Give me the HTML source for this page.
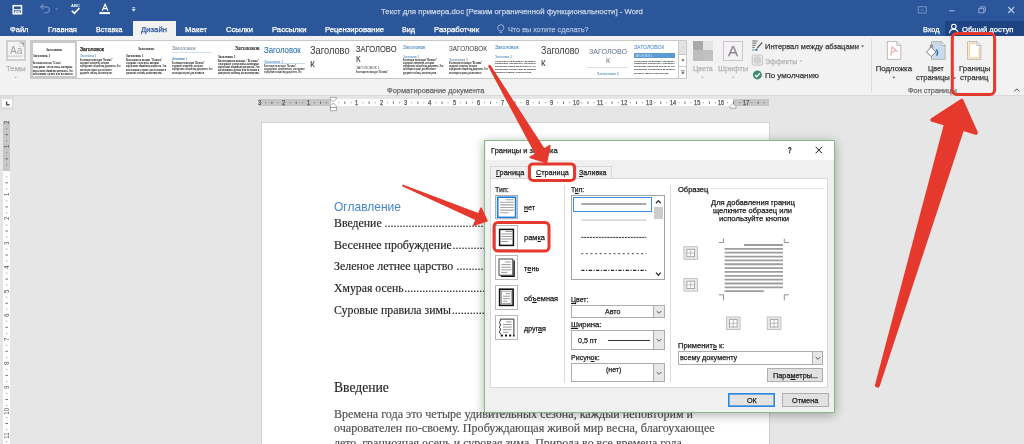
<!DOCTYPE html>
<html lang="ru"><head><meta charset="utf-8"><title>Word</title>
<style>
*{margin:0;padding:0;box-sizing:border-box}
html,body{width:1024px;height:444px;overflow:hidden;background:#e6e6e6}
body{will-change:transform;position:relative;font-family:"Liberation Sans",sans-serif;font-size:8px;color:#444}
.a{position:absolute}
.t{position:absolute;white-space:nowrap;transform-origin:0 50%;display:block;-webkit-text-stroke:.25px}
.vr{white-space:nowrap;display:block}
.f{font-family:"Liberation Serif",serif;-webkit-text-stroke:.15px}
svg{position:absolute;overflow:visible}
u{text-decoration:underline;text-decoration-thickness:0.6px;text-underline-offset:1px}
</style></head><body>
<div class="a" style="left:0px;top:0px;width:1024px;height:36px;background:#2b579a;"></div>
<div class="a" style="left:132.5px;top:21px;width:43.5px;height:15.5px;background:#f2f2f2;"></div>
<div class="a" style="left:945px;top:21px;width:79px;height:15px;background:#1f4484;"></div>
<span class="t" style="left:381px;top:6.7px;font-size:8px;line-height:10.4px;height:10.4px;color:#c8d3e6;transform:scaleX(0.972);">Текст для примера.doc [Режим ограниченной функциональности] - Word</span>
<span class="t" style="left:9.5px;top:24.7px;font-size:7.8px;line-height:10.1px;height:10.1px;color:#fff;transform:scaleX(0.965);">Файл</span>
<span class="t" style="left:48px;top:24.7px;font-size:7.8px;line-height:10.1px;height:10.1px;color:#fff;transform:scaleX(0.977);">Главная</span>
<span class="t" style="left:96px;top:24.7px;font-size:7.8px;line-height:10.1px;height:10.1px;color:#fff;transform:scaleX(0.914);">Вставка</span>
<span class="t" style="left:141px;top:24.7px;font-size:7.8px;line-height:10.1px;height:10.1px;color:#2b579a;transform:scaleX(0.992);">Дизайн</span>
<span class="t" style="left:185px;top:24.7px;font-size:7.8px;line-height:10.1px;height:10.1px;color:#fff;">Макет</span>
<span class="t" style="left:226px;top:24.7px;font-size:7.8px;line-height:10.1px;height:10.1px;color:#fff;transform:scaleX(0.983);">Ссылки</span>
<span class="t" style="left:272px;top:24.7px;font-size:7.8px;line-height:10.1px;height:10.1px;color:#fff;transform:scaleX(0.986);">Рассылки</span>
<span class="t" style="left:325px;top:24.7px;font-size:7.8px;line-height:10.1px;height:10.1px;color:#fff;transform:scaleX(0.980);">Рецензирование</span>
<span class="t" style="left:402px;top:24.7px;font-size:7.8px;line-height:10.1px;height:10.1px;color:#fff;transform:scaleX(0.921);">Вид</span>
<span class="t" style="left:433.5px;top:24.7px;font-size:7.8px;line-height:10.1px;height:10.1px;color:#fff;transform:scaleX(0.990);">Разработчик</span>
<span class="t" style="left:507.5px;top:24.7px;font-size:7.8px;line-height:10.1px;height:10.1px;color:#aabcdd;transform:scaleX(0.934);">Что вы хотите сделать?</span>
<span class="t" style="left:922.5px;top:24.7px;font-size:7.8px;line-height:10.1px;height:10.1px;color:#fff;transform:scaleX(0.935);">Вход</span>
<span class="t" style="left:962px;top:24.7px;font-size:7.8px;line-height:10.1px;height:10.1px;color:#fff;transform:scaleX(0.983);">Общий доступ</span>
<svg style="left:0;top:0" width="1024" height="36" viewBox="0 0 1024 36" fill="none">
<g stroke="#fff"><rect x="13.200" y="5.700" width="8.300" height="8.100" stroke-width="1.500"/><path d="M13.200 9.700h8.300" stroke-width="1.100"/><path d="M15.300 13.800v-2h4v2" stroke-width="1.200"/></g>
<g stroke="#718cbf" stroke-width="1.2"><path d="M44 13c3.5 0 5.4-1.2 5.4-3.2S47.600 6.800 45.500 6.800h-4.500M43.500 4.200l-2.800 2.600 2.800 2.600"/></g>
<path d="M55 8.400h3.400l-1.700 1.900z" fill="#718cbf"/>
<path d="M71.800 10.700l2.600 2.700 5-5.400" stroke="#fff" stroke-width="1.6"/>
<path d="M102.300 10.800l2.800-6.500 2.800 6.500M103.300 8.600h3.600" stroke="#fff" stroke-width="1.2"/>
<rect x="99.400" y="12.100" width="10.600" height="2" fill="#fff"/>
<path d="M132.200 7.600h3M132.200 9.200h3l-1.500 2z" stroke="#dfe6f2" stroke-width="0.8" fill="#dfe6f2"/>
<g stroke="#7d97c7" stroke-width="0.900"><rect x="918.200" y="6.700" width="8" height="6.300"/><path d="M921 10.700l1.200-1.300 1.200 1.300" /></g><path d="M949.200 10.800h5.400" stroke="#a9b9d9" stroke-width="1"/><g stroke="#98add4" stroke-width=".9"><rect x="978.800" y="8.400" width="5" height="4.400"/><path d="M980.300 8.400v-1.500h5v4.400h-1.500"/></g><path d="M1008.200 7l6 6M1014.200 7l-6 6" stroke="#bccae3" stroke-width="1.100"/>
<g stroke="#aabcdd" stroke-width="0.900"><path d="M499.700 31c-1.300-1-1.900-2-1.900-3.300a3 3 0 016 0c0 1.300-.6 2.300-1.900 3.300zM499.800 32.600h2.200"/></g>
<g stroke="#fff" stroke-width="1.100"><circle cx="953.800" cy="26.600" r="2.300"/><path d="M949.400 33.300c.3-2.800 2-4 4.400-4s4.100 1.200 4.400 4"/></g>
</svg>
<span class="t" style="left:70.6px;top:3.4px;font-size:16.8px;line-height:21.8px;height:21.8px;color:#fff;font-weight:bold;-webkit-text-stroke:0;transform-origin:0 0;transform:scale(0.2475,0.25);">ABC</span>
<div class="a" style="left:0px;top:36px;width:1024px;height:59px;background:#f2f2f2;"></div>
<div class="a" style="left:0px;top:94.5px;width:1024px;height:1px;background:#dadada;"></div>
<div class="a" style="left:5.7px;top:40.3px;width:20.2px;height:20.3px;background:#f6f2f6;border:2px solid #d0d0d0;"></div>
<svg style="left:0;top:36px" width="130" height="60" viewBox="0 36 130 60" fill="none"><path d="M19.800 42.300h4.300v4.300z" fill="#a8a8a8"/><path d="M19.800 42.300v4.300h4.300z" fill="#fff" stroke="#bdbdbd" stroke-width=".5"/><path d="M8.400 56.100h14.800" stroke="#b5b5b5" stroke-width="1.100" stroke-dasharray="1.500 .9"/><path d="M13.900 76.800h3.300l-1.650 1.700z" fill="#bdbdbd"/></svg>
<span class="t" style="left:9.8px;top:42.5px;font-size:11.8px;line-height:15.3px;height:15.3px;color:#a3a3a3;transform:scaleX(0.858);-webkit-text-stroke:0;">Аа</span>
<span class="t" style="left:6px;top:63.5px;font-size:7.8px;line-height:10.1px;height:10.1px;color:#b3b3b3;">Темы</span>
<div class="a" style="left:30px;top:40.4px;width:657.3px;height:38.2px;background:#fff;border:1px solid #c8c8c8;"></div>
<div class="a" style="left:30.8px;top:41.2px;width:45.9px;height:36.8px;background:#fff;border:2.500px solid #cacaca;"></div>
<span class="t f" style="left:46px;top:46.79px;font-size:14.4px;line-height:18.7px;height:18.7px;color:#1c1c1c;font-weight:bold;-webkit-text-stroke:0;transform-origin:0 0;transform:scale(0.2423,0.25);">Заголовок</span>
<span class="t f" style="left:33.4px;top:54.35px;font-size:12.8px;line-height:16.6px;height:16.6px;color:#1c1c1c;font-weight:bold;-webkit-text-stroke:0;transform-origin:0 0;transform:scale(0.2488,0.25);">Заголовок 1</span>
<span class="t f" style="left:33.4px;top:61.32px;font-size:12.0px;line-height:15.6px;height:15.6px;color:#1c1c1c;font-weight:bold;-webkit-text-stroke:0;transform-origin:0 0;transform:scale(0.1547,0.25);">Коллекции на вкладке "Вставка"</span>
<span class="t f" style="left:33.4px;top:64.74px;font-size:12.0px;line-height:15.6px;height:15.6px;color:#1c1c1c;font-weight:bold;-webkit-text-stroke:0;transform-origin:0 0;transform:scale(0.2526,0.25);">содержат элементы, которые</span>
<span class="t f" style="left:33.4px;top:68.64px;font-size:12.0px;line-height:15.6px;height:15.6px;color:#1c1c1c;font-weight:bold;-webkit-text-stroke:0;transform-origin:0 0;transform:scale(0.1861,0.25);">определяют общий вид документа. Эти</span>
<span class="t f" style="left:33.4px;top:72.24px;font-size:12.0px;line-height:15.6px;height:15.6px;color:#1c1c1c;font-weight:bold;-webkit-text-stroke:0;transform-origin:0 0;transform:scale(0.2208,0.25);">коллекции служат для вставки в</span>
<span class="t" style="left:79.5px;top:44.5px;font-size:22.4px;line-height:29.1px;height:29.1px;color:#1c1c1c;transform-origin:0 0;transform:scale(0.2280,0.25);-webkit-text-stroke:1.0px;">Заголовок</span>
<span class="t" style="left:79.5px;top:54.35px;font-size:12.8px;line-height:16.6px;height:16.6px;color:#2e74b5;-webkit-text-stroke:0;transform-origin:0 0;transform:scale(0.2329,0.25);">Заголовок 1</span>
<span class="t" style="left:79.5px;top:58.42px;font-size:10.8px;line-height:14.0px;height:14.0px;color:#1c1c1c;font-weight:bold;-webkit-text-stroke:0;transform-origin:0 0;transform:scale(0.1841,0.25);">Коллекции на вкладке "Вставка"</span>
<span class="t" style="left:79.5px;top:61.36px;font-size:10.8px;line-height:14.0px;height:14.0px;color:#1c1c1c;font-weight:bold;-webkit-text-stroke:0;transform-origin:0 0;transform:scale(0.1842,0.25);">содержат элементы, которые</span>
<span class="t" style="left:79.5px;top:64.46px;font-size:10.8px;line-height:14.0px;height:14.0px;color:#1c1c1c;font-weight:bold;-webkit-text-stroke:0;transform-origin:0 0;transform:scale(0.1903,0.25);">определяют общий вид документа. Эти</span>
<span class="t" style="left:79.5px;top:67.56px;font-size:10.8px;line-height:14.0px;height:14.0px;color:#1c1c1c;font-weight:bold;-webkit-text-stroke:0;transform-origin:0 0;transform:scale(0.1801,0.25);">коллекции служат для вставки в</span>
<span class="t" style="left:79.5px;top:70.86px;font-size:10.8px;line-height:14.0px;height:14.0px;color:#1c1c1c;font-weight:bold;-webkit-text-stroke:0;transform-origin:0 0;transform:scale(0.1851,0.25);">документ таблиц, колонтитулов,</span>
<span class="t f" style="left:138.1px;top:46.31px;font-size:15.2px;line-height:19.8px;height:19.8px;color:#1c1c1c;font-weight:bold;-webkit-text-stroke:0;transform-origin:0 0;transform:scale(0.2324,0.25);">Заголовок</span>
<span class="t f" style="left:125.6px;top:53.39px;font-size:14.4px;line-height:18.7px;height:18.7px;color:#1c1c1c;font-weight:bold;-webkit-text-stroke:0;transform-origin:0 0;transform:scale(0.2251,0.25);">Заголовок 1</span>
<span class="t f" style="left:125.6px;top:58.32px;font-size:12.0px;line-height:15.6px;height:15.6px;color:#1c1c1c;font-weight:bold;-webkit-text-stroke:0;transform-origin:0 0;transform:scale(0.1974,0.25);">Коллекции на вкладке "Вставка"</span>
<span class="t f" style="left:125.6px;top:60.94px;font-size:12.0px;line-height:15.6px;height:15.6px;color:#1c1c1c;font-weight:bold;-webkit-text-stroke:0;transform-origin:0 0;transform:scale(0.2131,0.25);">содержат элементы, которые</span>
<span class="t f" style="left:125.6px;top:64.34px;font-size:12.0px;line-height:15.6px;height:15.6px;color:#1c1c1c;font-weight:bold;-webkit-text-stroke:0;transform-origin:0 0;transform:scale(0.1894,0.25);">определяют общий вид документа. Эти</span>
<span class="t f" style="left:125.6px;top:67.54px;font-size:12.0px;line-height:15.6px;height:15.6px;color:#1c1c1c;font-weight:bold;-webkit-text-stroke:0;transform-origin:0 0;transform:scale(0.2247,0.25);">коллекции служат для вставки в</span>
<span class="t f" style="left:125.6px;top:70.74px;font-size:12.0px;line-height:15.6px;height:15.6px;color:#1c1c1c;font-weight:bold;-webkit-text-stroke:0;transform-origin:0 0;transform:scale(0.2030,0.25);">документ таблиц, колонтитулов,</span>
<span class="t" style="left:171.9px;top:43.7px;font-size:6.1px;line-height:7.9px;height:7.9px;color:#6b7a90;transform:scaleX(0.827);-webkit-text-stroke:0;">Заголовок</span>
<div class="a" style="left:171.9px;top:51.9px;width:40.6px;height:0.7px;background:#d0e0f0;"></div>
<span class="t" style="left:171.9px;top:57.35px;font-size:12.8px;line-height:16.6px;height:16.6px;color:#2e74b5;font-weight:bold;-webkit-text-stroke:0;transform-origin:0 0;transform:scale(0.1956,0.25);">Заголовок 1</span>
<span class="t" style="left:171.9px;top:60.72px;font-size:10.8px;line-height:14.0px;height:14.0px;color:#1c1c1c;font-weight:bold;-webkit-text-stroke:0;transform-origin:0 0;transform:scale(0.1845,0.25);">Коллекции на вкладке "Вставка"</span>
<span class="t" style="left:171.9px;top:63.76px;font-size:10.8px;line-height:14.0px;height:14.0px;color:#1c1c1c;font-weight:bold;-webkit-text-stroke:0;transform-origin:0 0;transform:scale(0.1949,0.25);">содержат элементы, которые</span>
<span class="t" style="left:171.9px;top:67.16px;font-size:10.8px;line-height:14.0px;height:14.0px;color:#1c1c1c;font-weight:bold;-webkit-text-stroke:0;transform-origin:0 0;transform:scale(0.1907,0.25);">определяют общий вид документа. Эти</span>
<span class="t" style="left:171.9px;top:70.66px;font-size:10.8px;line-height:14.0px;height:14.0px;color:#1c1c1c;font-weight:bold;-webkit-text-stroke:0;transform-origin:0 0;transform:scale(0.1835,0.25);">коллекции служат для вставки в</span>
<span class="t f" style="left:234.7px;top:44.2px;font-size:22.4px;line-height:29.1px;height:29.1px;color:#1c1c1c;transform-origin:0 0;transform:scale(0.2575,0.25);-webkit-text-stroke:0.6px;">Заголовок</span>
<span class="t f" style="left:218px;top:54.39px;font-size:14.4px;line-height:18.7px;height:18.7px;color:#1c1c1c;font-weight:bold;-webkit-text-stroke:0;transform-origin:0 0;transform:scale(0.2290,0.25);">Заголовок 1</span>
<span class="t f" style="left:218px;top:59.32px;font-size:12.0px;line-height:15.6px;height:15.6px;color:#1c1c1c;font-weight:bold;-webkit-text-stroke:0;transform-origin:0 0;transform:scale(0.2240,0.25);">Коллекции на вкладке "Вставка"</span>
<span class="t f" style="left:218px;top:61.84px;font-size:12.0px;line-height:15.6px;height:15.6px;color:#1c1c1c;font-weight:bold;-webkit-text-stroke:0;transform-origin:0 0;transform:scale(0.2635,0.25);">содержат элементы, которые</span>
<span class="t f" style="left:218px;top:65.04px;font-size:12.0px;line-height:15.6px;height:15.6px;color:#1c1c1c;font-weight:bold;-webkit-text-stroke:0;transform-origin:0 0;transform:scale(0.1941,0.25);">определяют общий вид документа. Эти</span>
<span class="t f" style="left:218px;top:67.94px;font-size:12.0px;line-height:15.6px;height:15.6px;color:#1c1c1c;font-weight:bold;-webkit-text-stroke:0;transform-origin:0 0;transform:scale(0.2303,0.25);">коллекции служат для вставки в</span>
<span class="t f" style="left:218px;top:71.14px;font-size:12.0px;line-height:15.6px;height:15.6px;color:#1c1c1c;font-weight:bold;-webkit-text-stroke:0;transform-origin:0 0;transform:scale(0.2338,0.25);">документ таблиц, колонтитулов,</span>
<span class="t" style="left:264.2px;top:44.6px;font-size:8.6px;line-height:11.2px;height:11.2px;color:#2e74b5;transform:scaleX(0.908);-webkit-text-stroke:.1px;">Заголовок</span>
<span class="t" style="left:264.2px;top:58.89px;font-size:14.4px;line-height:18.7px;height:18.7px;color:#2e74b5;-webkit-text-stroke:0;transform-origin:0 0;transform:scale(0.2397,0.25);">Заголовок 1</span>
<div class="a" style="left:264.2px;top:63px;width:41px;height:0.6px;background:#c5d9ee;"></div>
<span class="t" style="left:264.2px;top:63.62px;font-size:10.8px;line-height:14.0px;height:14.0px;color:#333;font-weight:bold;-webkit-text-stroke:0;transform-origin:0 0;transform:scale(0.1831,0.25);">Коллекции на вкладке "Вставка"</span>
<span class="t" style="left:264.2px;top:66.76px;font-size:10.8px;line-height:14.0px;height:14.0px;color:#333;font-weight:bold;-webkit-text-stroke:0;transform-origin:0 0;transform:scale(0.2577,0.25);">содержат элементы, которые</span>
<span class="t" style="left:264.2px;top:70.06px;font-size:10.8px;line-height:14.0px;height:14.0px;color:#333;font-weight:bold;-webkit-text-stroke:0;transform-origin:0 0;transform:scale(0.1754,0.25);">определяют общий вид документа. Эти</span>
<span class="t" style="left:310.4px;top:44.4px;font-size:10.2px;line-height:13.3px;height:13.3px;color:#3a3a3a;transform:scaleX(0.911);-webkit-text-stroke:0;">Заголово</span>
<span class="t" style="left:310.4px;top:56.6px;font-size:10.2px;line-height:13.3px;height:13.3px;color:#3a3a3a;transform:scaleX(1.052);-webkit-text-stroke:0;">к</span>
<span class="t" style="left:356.4px;top:44.2px;font-size:8.6px;line-height:11.2px;height:11.2px;color:#3a3a3a;transform:scaleX(0.878);-webkit-text-stroke:.1px;">ЗАГОЛОВО</span>
<span class="t" style="left:356.4px;top:53.9px;font-size:8.6px;line-height:11.2px;height:11.2px;color:#3a3a3a;transform:scaleX(0.917);-webkit-text-stroke:.1px;">К</span>
<span class="t" style="left:356.4px;top:65.09px;font-size:14.4px;line-height:18.7px;height:18.7px;color:#444;-webkit-text-stroke:0;transform-origin:0 0;transform:scale(0.2417,0.25);">ЗАГОЛОВОК 1</span>
<span class="t" style="left:356.4px;top:70.22px;font-size:10.8px;line-height:14.0px;height:14.0px;color:#333;font-weight:bold;-webkit-text-stroke:0;transform-origin:0 0;transform:scale(0.1818,0.25);">Коллекции на вкладке "Вставка"</span>
<span class="t" style="left:402.7px;top:44.15px;font-size:20.8px;line-height:27.0px;height:27.0px;color:#2e74b5;transform-origin:0 0;transform:scale(0.2291,0.25);-webkit-text-stroke:0;">Заголовок</span>
<span class="t" style="left:402.7px;top:54.29px;font-size:14.4px;line-height:18.7px;height:18.7px;color:#2e74b5;-webkit-text-stroke:0;transform-origin:0 0;transform:scale(0.2046,0.25);">Заголовок 1</span>
<span class="t" style="left:402.7px;top:58.22px;font-size:10.8px;line-height:14.0px;height:14.0px;color:#1c1c1c;font-weight:bold;-webkit-text-stroke:0;transform-origin:0 0;transform:scale(0.1914,0.25);">Коллекции на вкладке "Вставка"</span>
<span class="t" style="left:402.7px;top:61.16px;font-size:10.8px;line-height:14.0px;height:14.0px;color:#1c1c1c;font-weight:bold;-webkit-text-stroke:0;transform-origin:0 0;transform:scale(0.1970,0.25);">содержат элементы, которые</span>
<span class="t" style="left:402.7px;top:64.26px;font-size:10.8px;line-height:14.0px;height:14.0px;color:#1c1c1c;font-weight:bold;-webkit-text-stroke:0;transform-origin:0 0;transform:scale(0.1893,0.25);">определяют общий вид документа. Эти</span>
<span class="t" style="left:402.7px;top:67.46px;font-size:10.8px;line-height:14.0px;height:14.0px;color:#1c1c1c;font-weight:bold;-webkit-text-stroke:0;transform-origin:0 0;transform:scale(0.1863,0.25);">коллекции служат для вставки в</span>
<span class="t" style="left:402.7px;top:70.56px;font-size:10.8px;line-height:14.0px;height:14.0px;color:#1c1c1c;font-weight:bold;-webkit-text-stroke:0;transform-origin:0 0;transform:scale(0.1925,0.25);">документ таблиц, колонтитулов,</span>
<span class="t" style="left:449px;top:43.5px;font-size:7.6px;line-height:9.9px;height:9.9px;color:#3b3b3b;transform:scaleX(0.838);-webkit-text-stroke:0;">ЗАГОЛОВОК</span>
<span class="t" style="left:449px;top:56.79px;font-size:14.4px;line-height:18.7px;height:18.7px;color:#44709c;-webkit-text-stroke:0;transform-origin:0 0;transform:scale(0.2385,0.25);">Заголовок 1</span>
<span class="t" style="left:449px;top:61.42px;font-size:10.8px;line-height:14.0px;height:14.0px;color:#1c1c1c;font-weight:bold;-webkit-text-stroke:0;transform-origin:0 0;transform:scale(0.1886,0.25);">Коллекции на вкладке "Вставка"</span>
<span class="t" style="left:449px;top:64.36px;font-size:10.8px;line-height:14.0px;height:14.0px;color:#1c1c1c;font-weight:bold;-webkit-text-stroke:0;transform-origin:0 0;transform:scale(0.1768,0.25);">содержат элементы, которые</span>
<span class="t" style="left:449px;top:67.46px;font-size:10.8px;line-height:14.0px;height:14.0px;color:#1c1c1c;font-weight:bold;-webkit-text-stroke:0;transform-origin:0 0;transform:scale(0.1813,0.25);">определяют общий вид документа. Эти</span>
<span class="t" style="left:449px;top:70.66px;font-size:10.8px;line-height:14.0px;height:14.0px;color:#1c1c1c;font-weight:bold;-webkit-text-stroke:0;transform-origin:0 0;transform:scale(0.1853,0.25);">коллекции служат для вставки в</span>
<span class="t" style="left:495.1px;top:44.15px;font-size:20.8px;line-height:27.0px;height:27.0px;color:#2e74b5;transform-origin:0 0;transform:scale(0.2424,0.25);-webkit-text-stroke:0;">Заголовок</span>
<span class="t" style="left:495.1px;top:54.49px;font-size:14.4px;line-height:18.7px;height:18.7px;color:#2e74b5;-webkit-text-stroke:0;transform-origin:0 0;transform:scale(0.2121,0.25);">Заголовок 1</span>
<span class="t" style="left:495.1px;top:58.8px;font-size:10.0px;line-height:13.0px;height:13.0px;color:#1c1c1c;font-weight:bold;-webkit-text-stroke:0;transform-origin:0 0;transform:scale(0.2509,0.25);">Коллекции на вкладке "Вставка"</span>
<span class="t" style="left:495.1px;top:61.36px;font-size:10.0px;line-height:13.0px;height:13.0px;color:#1c1c1c;font-weight:bold;-webkit-text-stroke:0;transform-origin:0 0;transform:scale(0.2790,0.25);">содержат элементы, которые</span>
<span class="t" style="left:495.1px;top:64.16px;font-size:10.0px;line-height:13.0px;height:13.0px;color:#1c1c1c;font-weight:bold;-webkit-text-stroke:0;transform-origin:0 0;transform:scale(0.2074,0.25);">определяют общий вид документа. Эти</span>
<span class="t" style="left:495.1px;top:67.16px;font-size:10.0px;line-height:13.0px;height:13.0px;color:#1c1c1c;font-weight:bold;-webkit-text-stroke:0;transform-origin:0 0;transform:scale(0.2517,0.25);">коллекции служат для вставки в</span>
<span class="t" style="left:495.1px;top:70.16px;font-size:10.0px;line-height:13.0px;height:13.0px;color:#1c1c1c;font-weight:bold;-webkit-text-stroke:0;transform-origin:0 0;transform:scale(0.2270,0.25);">документ таблиц, колонтитулов,</span>
<span class="t" style="left:541.2px;top:44.2px;font-size:10px;line-height:13.0px;height:13.0px;color:#3a3a3a;transform:scaleX(0.898);-webkit-text-stroke:0;">Заголово</span>
<span class="t" style="left:541.2px;top:56.4px;font-size:10px;line-height:13.0px;height:13.0px;color:#3a3a3a;transform:scaleX(1.006);-webkit-text-stroke:0;">к</span>
<span class="t" style="left:588.5px;top:46.8px;font-size:7.8px;line-height:10.1px;height:10.1px;color:#5f6f86;transform:scaleX(0.910);-webkit-text-stroke:0;">ЗАГОЛОВО</span>
<span class="t" style="left:605.7px;top:55.9px;font-size:7.8px;line-height:10.1px;height:10.1px;color:#5f6f86;transform:scaleX(0.902);-webkit-text-stroke:0;">К</span>
<div class="a" style="left:587px;top:66.6px;width:41px;height:0.6px;background:#dedede;"></div>
<span class="t" style="left:596.6px;top:71.39px;font-size:14.4px;line-height:18.7px;height:18.7px;color:#2e74b5;-webkit-text-stroke:0;transform-origin:0 0;transform:scale(0.2761,0.25);">Заголовок 1</span>
<span class="t" style="left:633.5px;top:43.4px;font-size:6.1px;line-height:7.9px;height:7.9px;color:#3a7cc0;transform:scaleX(0.841);-webkit-text-stroke:0;">ЗАГОЛОВОК</span>
<div class="a" style="left:633.5px;top:53.1px;width:41.5px;height:4.7px;background:#5b9bd5;"></div>
<span class="t" style="left:634.5px;top:53.75px;font-size:11.2px;line-height:14.6px;height:14.6px;color:#dce9f6;-webkit-text-stroke:0;transform-origin:0 0;transform:scale(0.2305,0.25);">ЗАГОЛОВОК 1</span>
<span class="t" style="left:633.5px;top:58.8px;font-size:10.0px;line-height:13.0px;height:13.0px;color:#1c1c1c;font-weight:bold;-webkit-text-stroke:0;transform-origin:0 0;transform:scale(0.2496,0.25);">Коллекции на вкладке "Вставка"</span>
<span class="t" style="left:633.5px;top:61.36px;font-size:10.0px;line-height:13.0px;height:13.0px;color:#1c1c1c;font-weight:bold;-webkit-text-stroke:0;transform-origin:0 0;transform:scale(0.2776,0.25);">содержат элементы, которые</span>
<span class="t" style="left:633.5px;top:64.25px;font-size:10.0px;line-height:13.0px;height:13.0px;color:#1c1c1c;font-weight:bold;-webkit-text-stroke:0;transform-origin:0 0;transform:scale(0.2064,0.25);">определяют общий вид документа. Эти</span>
<span class="t" style="left:633.5px;top:67.45px;font-size:10.0px;line-height:13.0px;height:13.0px;color:#1c1c1c;font-weight:bold;-webkit-text-stroke:0;transform-origin:0 0;transform:scale(0.2505,0.25);">коллекции служат для вставки в</span>
<span class="t" style="left:633.5px;top:70.56px;font-size:10.0px;line-height:13.0px;height:13.0px;color:#1c1c1c;font-weight:bold;-webkit-text-stroke:0;transform-origin:0 0;transform:scale(0.2159,0.25);">документ таблиц, колонтитулов,</span>
<div class="a" style="left:678.4px;top:40.4px;width:8.9px;height:38.2px;background:#fff;border:1px solid #c8c8c8;"></div>
<div class="a" style="left:679.2px;top:41.2px;width:7.3px;height:12.6px;background:#e3e3e3;"></div>
<div class="a" style="left:678.4px;top:53.8px;width:8.9px;height:1px;background:#c8c8c8;"></div>
<div class="a" style="left:678.4px;top:66.2px;width:8.9px;height:1px;background:#c8c8c8;"></div>
<svg style="left:670px;top:36px" width="130" height="60" viewBox="670 36 130 60" fill="none"><path d="M681.400 48l1.500-1.400 1.500 1.400" stroke="#c6c6c6" stroke-width=".8"/><path d="M681.100 59.500h3.600l-1.800 2z" fill="#555"/><path d="M681 70.800h3.800" stroke="#555" stroke-width=".8"/><path d="M681.100 72.300h3.600l-1.800 2z" fill="#555"/><path d="M700.900 76.800h3.300l-1.650 1.700zM731.500 76.800h3.300l-1.650 1.700z" fill="#bdbdbd"/></svg>
<div class="a" style="left:692.8px;top:40.6px;width:10.2px;height:9.8px;background:#a9a9a9;"></div>
<div class="a" style="left:703px;top:40.6px;width:10.2px;height:9.8px;background:#e6e5e6;"></div>
<div class="a" style="left:692.8px;top:50.4px;width:10.2px;height:10.2px;background:#bdbdbd;"></div>
<div class="a" style="left:703px;top:50.4px;width:10.2px;height:10.2px;background:#c3c0c3;"></div>
<span class="t" style="left:693px;top:63.5px;font-size:7.8px;line-height:10.1px;height:10.1px;color:#b3b3b3;transform:scaleX(0.911);">Цвета</span>
<div class="a" style="left:722.6px;top:40.6px;width:20.4px;height:20px;background:#f6f1f6;border:1px solid #c9c9c9;"></div>
<span class="t" style="left:727.6px;top:42.39px;font-size:14.5px;line-height:18.9px;height:18.9px;color:#8c8c8c;transform:scaleX(1.044);">A</span>
<span class="t" style="left:717.8px;top:63.5px;font-size:7.8px;line-height:10.1px;height:10.1px;color:#b3b3b3;transform:scaleX(0.966);">Шрифты</span>
<svg style="left:750px;top:36px" width="20" height="60" viewBox="750 36 20 60" fill="none"><g stroke="#555" stroke-width=".9"><path d="M752.300 41h5.200M752.300 43.200h4.200M752.300 45.400h3.200M752.300 47.600h2.400M752.300 50h2"/></g><path d="M762.200 43.200l-4.300 5-1 .2.200-1 4.300-5c.6-.5 1.300.2.800.8z" fill="#444"/><path d="M754.800 50.300c.8-1.700 2.300-1.800 2.900-.9.500.9-.9 1.700-2.900.9z" fill="#2f6fc0"/><rect x="752.300" y="55" width="10.200" height="10.200" rx="1.400" fill="#e9e9e9" stroke="#c2c2c2" stroke-width=".9"/><circle cx="757.400" cy="60.100" r="3.500" fill="#d2d2d2" stroke="#c6c6c6" stroke-width=".5"/><circle cx="757.400" cy="74.900" r="4.500" fill="#3f8a72"/><path d="M755 75l1.700 1.800 3.200-3.600" stroke="#fff" stroke-width="1.300"/></svg>
<span class="t" style="left:764.6px;top:42.0px;font-size:7.9px;line-height:10.3px;height:10.3px;color:#3a3a3a;transform:scaleX(0.950);">Интервал между абзацами</span>
<span class="t" style="left:764.6px;top:56.5px;font-size:7.9px;line-height:10.3px;height:10.3px;color:#b3b3b3;transform:scaleX(0.903);">Эффекты</span>
<span class="t" style="left:764.6px;top:71.0px;font-size:7.9px;line-height:10.3px;height:10.3px;color:#3a3a3a;transform:scaleX(1.010);">По умолчанию</span>
<svg style="left:790px;top:36px" width="80" height="60" viewBox="790 36 80 60"><path d="M861 45.400h3.200l-1.600 1.800z" fill="#555"/><path d="M799.400 60.300h3l-1.500 1.700z" fill="#bdbdbd"/></svg>
<div class="a" style="left:871.4px;top:39px;width:0.9px;height:53px;background:#dcdcdc;"></div>
<svg style="left:865px;top:36px" width="159" height="60" viewBox="865 36 159 60" fill="none">
<path d="M887.300 41.600h9.600l3.900 3.900v13.900h-13.500z" fill="#fff" stroke="#a9a9a9" stroke-width=".8"/><path d="M896.900 41.600v3.900h3.900" stroke="#a9a9a9" stroke-width=".8"/>
<path d="M890.800 55.600l1.300-8.600 5.800 4.800M891.300 52.500l4.300-1.800" stroke="#f2b0b0" stroke-width="1.300"/>
<path d="M931.500 41.600h9.700l3.900 3.900v13.900h-13.600z" fill="#cbdaec" stroke="#a9a9a9" stroke-width=".8"/><path d="M941.200 41.600v3.900h3.900z" fill="#fff" stroke="#a9a9a9" stroke-width=".8"/>
<path d="M926.400 51.800l4.800-4.600 4.800 4.800-4.800 4.600z" fill="#fff" stroke="#6e6e6e" stroke-width=".9"/><path d="M930.200 47.800v-2.600h2.400v2.400" stroke="#6e6e6e" stroke-width=".8"/><path d="M936.400 49.500c1.500 2 1.400 4.200.2 6.200" stroke="#2f6fc0" stroke-width="1.500"/>
<path d="M967.600 41.600h9.300l3.900 3.900v13.900h-13.200z" fill="#fff" stroke="#a9a9a9" stroke-width=".8"/><path d="M976.900 41.600v3.900h3.900" stroke="#a9a9a9" stroke-width=".8"/>
<path d="M969.300 43.300h6.500M979.200 47v10.900h-9.900v-14.600" stroke="#f6d29c" stroke-width="1.400"/>
<path d="M892.200 76.700h3.200l-1.600 1.800zM952.900 77.400h3.200l-1.600 1.800z" fill="#555"/>
<path d="M1014.200 91.500l2.600-2.700 2.600 2.700" stroke="#555" stroke-width="1"/>
</svg>
<span class="t" style="left:875.7px;top:64.3px;font-size:7.8px;line-height:10.1px;height:10.1px;color:#3a3a3a;">Подложка</span>
<span class="t" style="left:927.7px;top:64.3px;font-size:7.8px;line-height:10.1px;height:10.1px;color:#3a3a3a;transform:scaleX(0.904);">Цвет</span>
<span class="t" style="left:916.2px;top:73.3px;font-size:7.8px;line-height:10.1px;height:10.1px;color:#3a3a3a;transform:scaleX(0.969);">страницы</span>
<span class="t" style="left:958.8px;top:64.3px;font-size:7.8px;line-height:10.1px;height:10.1px;color:#3a3a3a;transform:scaleX(1.010);">Границы</span>
<span class="t" style="left:960.3px;top:73.3px;font-size:7.8px;line-height:10.1px;height:10.1px;color:#3a3a3a;transform:scaleX(0.970);">страниц</span>
<span class="t" style="left:386.5px;top:85.6px;font-size:7.8px;line-height:10.1px;height:10.1px;color:#6a6a6a;transform:scaleX(0.953);">Форматирование документа</span>
<span class="t" style="left:908.3px;top:85.6px;font-size:7.8px;line-height:10.1px;height:10.1px;color:#6a6a6a;transform:scaleX(0.944);">Фон страницы</span>
<div class="a" style="left:0px;top:96px;width:14px;height:13.6px;background:#dedede;"></div>
<div class="a" style="left:2.3px;top:98.5px;width:9.6px;height:8.6px;background:#fdfdfd;"></div>
<svg style="left:0;top:96px" width="14" height="14" viewBox="0 96 14 14" fill="none"><path d="M6.600 101.600v3.200h3" stroke="#555" stroke-width="1.400"/></svg>
<div class="a" style="left:258.6px;top:99px;width:72.7px;height:6.8px;background:#c6c6c6;"></div>
<div class="a" style="left:331.3px;top:99px;width:401.4px;height:6.8px;background:#fff;"></div>
<div class="a" style="left:732.7px;top:99px;width:36.2px;height:6.8px;background:#c6c6c6;"></div>
<svg style="left:0;top:96px" width="1024" height="16" viewBox="0 96 1024 16" fill="none"><path d="M265.9 102.300v.9M271.9 101.300v2.800M278.0 102.300v.9M290.2 102.300v.9M296.2 101.300v2.800M302.3 102.300v.9M314.5 102.300v.9M320.6 101.300v2.800M326.6 102.300v.9M338.8 102.300v.9M344.8 101.300v2.800M350.9 102.300v.9M363.1 102.300v.9M369.1 101.300v2.800M375.2 102.300v.9M387.4 102.300v.9M393.4 101.300v2.800M399.5 102.300v.9M411.7 102.300v.9M417.8 101.300v2.800M423.8 102.300v.9M436.0 102.300v.9M442.1 101.300v2.800M448.1 102.300v.9M460.3 102.300v.9M466.4 101.300v2.800M472.4 102.300v.9M484.6 102.300v.9M490.6 101.300v2.800M496.7 102.300v.9M508.9 102.300v.9M515.0 101.300v2.800M521.0 102.300v.9M533.2 102.300v.9M539.2 101.300v2.800M545.3 102.300v.9M557.5 102.300v.9M563.5 101.300v2.800M569.6 102.300v.9M581.8 102.300v.9M587.9 101.300v2.800M593.9 102.300v.9M606.1 102.300v.9M612.1 101.300v2.800M618.2 102.300v.9M630.4 102.300v.9M636.5 101.300v2.800M642.5 102.300v.9M654.7 102.300v.9M660.8 101.300v2.800M666.8 102.300v.9M679.0 102.300v.9M685.0 101.300v2.800M691.1 102.300v.9M703.3 102.300v.9M709.4 101.300v2.800M715.4 102.300v.9M727.6 102.300v.9M733.6 101.300v2.800M739.7 102.300v.9M751.9 102.300v.9M758.0 101.300v2.800M764.0 102.300v.9" stroke="#5a5a5a" stroke-width=".8"/><path d="M330.300 97.400h6v1.600l-3 3-3-3z" fill="#fff" stroke="#8a8a8a" stroke-width=".7"/><path d="M330.300 107.600v-1.600l3-3 3 3v1.600z" fill="#fff" stroke="#8a8a8a" stroke-width=".7"/><rect x="330.300" y="107.600" width="6" height="3.200" fill="#fff" stroke="#8a8a8a" stroke-width=".7"/><path d="M730 108.200v-1.700l3-3 3 3v1.700z" fill="#fff" stroke="#8a8a8a" stroke-width=".7"/></svg>
<span class="t" style="left:258.1px;top:98.93px;font-size:6.5px;line-height:8.5px;height:8.5px;color:#555;transform:scaleX(0.910);">3</span>
<span class="t" style="left:282.4px;top:98.93px;font-size:6.5px;line-height:8.5px;height:8.5px;color:#555;transform:scaleX(0.910);">2</span>
<span class="t" style="left:306.8px;top:98.93px;font-size:6.5px;line-height:8.5px;height:8.5px;color:#555;transform:scaleX(0.883);">1</span>
<span class="t" style="left:355.4px;top:98.93px;font-size:6.5px;line-height:8.5px;height:8.5px;color:#555;transform:scaleX(0.883);">1</span>
<span class="t" style="left:379.7px;top:98.93px;font-size:6.5px;line-height:8.5px;height:8.5px;color:#555;transform:scaleX(0.883);">2</span>
<span class="t" style="left:404.0px;top:98.93px;font-size:6.5px;line-height:8.5px;height:8.5px;color:#555;transform:scaleX(0.883);">3</span>
<span class="t" style="left:428.2px;top:98.93px;font-size:6.5px;line-height:8.5px;height:8.5px;color:#555;transform:scaleX(0.910);">4</span>
<span class="t" style="left:452.6px;top:98.93px;font-size:6.5px;line-height:8.5px;height:8.5px;color:#555;transform:scaleX(0.883);">5</span>
<span class="t" style="left:476.9px;top:98.93px;font-size:6.5px;line-height:8.5px;height:8.5px;color:#555;transform:scaleX(0.883);">6</span>
<span class="t" style="left:501.1px;top:98.93px;font-size:6.5px;line-height:8.5px;height:8.5px;color:#555;transform:scaleX(0.910);">7</span>
<span class="t" style="left:525.5px;top:98.93px;font-size:6.5px;line-height:8.5px;height:8.5px;color:#555;transform:scaleX(0.910);">8</span>
<span class="t" style="left:549.8px;top:98.93px;font-size:6.5px;line-height:8.5px;height:8.5px;color:#555;transform:scaleX(0.883);">9</span>
<span class="t" style="left:572.6px;top:98.93px;font-size:6.5px;line-height:8.5px;height:8.5px;color:#555;transform:scaleX(0.871);">10</span>
<span class="t" style="left:596.9px;top:98.93px;font-size:6.5px;line-height:8.5px;height:8.5px;color:#555;transform:scaleX(0.919);">11</span>
<span class="t" style="left:621.1px;top:98.93px;font-size:6.5px;line-height:8.5px;height:8.5px;color:#555;transform:scaleX(0.871);">12</span>
<span class="t" style="left:645.5px;top:98.93px;font-size:6.5px;line-height:8.5px;height:8.5px;color:#555;transform:scaleX(0.871);">13</span>
<span class="t" style="left:669.8px;top:98.93px;font-size:6.5px;line-height:8.5px;height:8.5px;color:#555;transform:scaleX(0.857);">14</span>
<span class="t" style="left:694.1px;top:98.93px;font-size:6.5px;line-height:8.5px;height:8.5px;color:#555;transform:scaleX(0.871);">15</span>
<span class="t" style="left:718.4px;top:98.93px;font-size:6.5px;line-height:8.5px;height:8.5px;color:#555;transform:scaleX(0.857);">16</span>
<span class="t" style="left:742.6px;top:98.93px;font-size:6.5px;line-height:8.5px;height:8.5px;color:#555;transform:scaleX(0.871);">17</span>
<div class="a" style="left:3.4px;top:121.2px;width:6.5px;height:49.6px;background:#c6c6c6;"></div>
<div class="a" style="left:3.4px;top:170.8px;width:6.5px;height:280px;background:#fff;"></div>
<svg style="left:0;top:110px" width="14" height="334" viewBox="0 110 14 334" fill="none"><path d="M6.300 128.7h.9M5.300 134.7h2.800M6.300 140.7h.9M6.300 152.7h.9M5.300 158.8h2.800M6.300 164.8h.9M6.300 176.8h.9M5.300 182.8h2.800M6.300 188.9h.9M6.300 200.9h.9M5.300 206.9h2.800M6.300 212.9h.9M6.300 225.0h.9M5.300 231.0h2.800M6.300 237.0h.9M6.300 249.0h.9M5.300 255.0h2.800M6.300 261.1h.9M6.300 273.1h.9M5.300 279.1h2.800M6.300 285.1h.9M6.300 297.2h.9M5.300 303.2h2.800M6.300 309.2h.9M6.300 321.2h.9M5.300 327.3h2.800M6.300 333.3h.9M6.300 345.3h.9M5.300 351.3h2.800M6.300 357.3h.9M6.300 369.4h.9M5.300 375.4h2.800M6.300 381.4h.9M6.300 393.4h.9M5.300 399.5h2.800M6.300 405.5h.9M6.300 417.5h.9M5.300 423.5h2.800M6.300 429.6h.9M6.300 441.6h.9" stroke="#5a5a5a" stroke-width=".8"/></svg>
<span class="a vr" style="left:4.9px;top:118.2px;width:3.6px;height:9px;line-height:9px;font-size:6.800px;color:#555;text-align:center;transform-origin:50% 50%;transform:rotate(-90deg) scaleX(.9)">2</span>
<span class="a vr" style="left:4.9px;top:142.2px;width:3.6px;height:9px;line-height:9px;font-size:6.800px;color:#555;text-align:center;transform-origin:50% 50%;transform:rotate(-90deg) scaleX(.9)">1</span>
<span class="a vr" style="left:4.9px;top:190.4px;width:3.6px;height:9px;line-height:9px;font-size:6.800px;color:#555;text-align:center;transform-origin:50% 50%;transform:rotate(-90deg) scaleX(.9)">1</span>
<span class="a vr" style="left:4.9px;top:214.4px;width:3.6px;height:9px;line-height:9px;font-size:6.800px;color:#555;text-align:center;transform-origin:50% 50%;transform:rotate(-90deg) scaleX(.9)">2</span>
<span class="a vr" style="left:4.9px;top:238.5px;width:3.6px;height:9px;line-height:9px;font-size:6.800px;color:#555;text-align:center;transform-origin:50% 50%;transform:rotate(-90deg) scaleX(.9)">3</span>
<span class="a vr" style="left:4.9px;top:262.6px;width:3.6px;height:9px;line-height:9px;font-size:6.800px;color:#555;text-align:center;transform-origin:50% 50%;transform:rotate(-90deg) scaleX(.9)">4</span>
<span class="a vr" style="left:4.9px;top:286.6px;width:3.6px;height:9px;line-height:9px;font-size:6.800px;color:#555;text-align:center;transform-origin:50% 50%;transform:rotate(-90deg) scaleX(.9)">5</span>
<span class="a vr" style="left:4.9px;top:310.7px;width:3.6px;height:9px;line-height:9px;font-size:6.800px;color:#555;text-align:center;transform-origin:50% 50%;transform:rotate(-90deg) scaleX(.9)">6</span>
<span class="a vr" style="left:4.9px;top:334.8px;width:3.6px;height:9px;line-height:9px;font-size:6.800px;color:#555;text-align:center;transform-origin:50% 50%;transform:rotate(-90deg) scaleX(.9)">7</span>
<span class="a vr" style="left:4.9px;top:358.9px;width:3.6px;height:9px;line-height:9px;font-size:6.800px;color:#555;text-align:center;transform-origin:50% 50%;transform:rotate(-90deg) scaleX(.9)">8</span>
<span class="a vr" style="left:4.9px;top:382.9px;width:3.6px;height:9px;line-height:9px;font-size:6.800px;color:#555;text-align:center;transform-origin:50% 50%;transform:rotate(-90deg) scaleX(.9)">9</span>
<span class="a vr" style="left:3.1px;top:407.0px;width:7.2px;height:9px;line-height:9px;font-size:6.800px;color:#555;text-align:center;transform-origin:50% 50%;transform:rotate(-90deg) scaleX(.9)">10</span>
<span class="a vr" style="left:3.1px;top:431.1px;width:7.2px;height:9px;line-height:9px;font-size:6.800px;color:#555;text-align:center;transform-origin:50% 50%;transform:rotate(-90deg) scaleX(.9)">11</span>
<div class="a" style="left:261px;top:122px;width:508.6px;height:330px;background:#fff;border:1px solid #d2d2d2;"></div>
<span class="t" style="left:333.8px;top:199.5px;font-size:12.2px;line-height:15.9px;height:15.9px;color:#4787c7;transform:scaleX(0.985);-webkit-text-stroke:0;">Оглавление</span>
<span class="t f" style="left:333.8px;top:215.8px;font-size:12px;line-height:15.6px;height:15.6px;color:#1e1e1e;transform:scaleX(0.986);">Введение</span>
<span class="t f" style="left:384.4px;top:215.8px;font-size:12px;line-height:15.6px;height:15.6px;color:#1e1e1e;width:115.6px;overflow:hidden;">............................................................</span>
<span class="t f" style="left:333.8px;top:237.6px;font-size:12px;line-height:15.6px;height:15.6px;color:#1e1e1e;transform:scaleX(0.993);">Весеннее пробуждение</span>
<span class="t f" style="left:452.6px;top:237.6px;font-size:12px;line-height:15.6px;height:15.6px;color:#1e1e1e;width:47.4px;overflow:hidden;">............................................................</span>
<span class="t f" style="left:333.8px;top:259.4px;font-size:12px;line-height:15.6px;height:15.6px;color:#1e1e1e;transform:scaleX(0.993);">Зеленое летнее царство</span>
<span class="t f" style="left:456.4px;top:259.4px;font-size:12px;line-height:15.6px;height:15.6px;color:#1e1e1e;width:43.6px;overflow:hidden;">............................................................</span>
<span class="t f" style="left:333.8px;top:281.2px;font-size:12px;line-height:15.6px;height:15.6px;color:#1e1e1e;transform:scaleX(0.979);">Хмурая осень</span>
<span class="t f" style="left:404.3px;top:281.2px;font-size:12px;line-height:15.6px;height:15.6px;color:#1e1e1e;width:95.7px;overflow:hidden;">............................................................</span>
<span class="t f" style="left:333.8px;top:303.0px;font-size:12px;line-height:15.6px;height:15.6px;color:#1e1e1e;transform:scaleX(0.985);">Суровые правила зимы</span>
<span class="t f" style="left:451.7px;top:303.0px;font-size:12px;line-height:15.6px;height:15.6px;color:#1e1e1e;width:48.3px;overflow:hidden;">............................................................</span>
<span class="t f" style="left:333.5px;top:378.5px;font-size:14px;line-height:18.2px;height:18.2px;color:#1e1e1e;transform:scaleX(0.973);">Введение</span>
<span class="t f" style="left:333.9px;top:406.8px;font-size:12px;line-height:15.6px;height:15.6px;color:#4d4d4d;transform:scaleX(1.004);">Времена года это четыре удивительных сезона, каждый неповторим и</span>
<span class="t f" style="left:333.9px;top:421.2px;font-size:12px;line-height:15.6px;height:15.6px;color:#4d4d4d;transform:scaleX(1.006);">очарователен по-своему. Пробуждающая живой мир весна, благоухающее</span>
<span class="t f" style="left:333.9px;top:435.6px;font-size:12px;line-height:15.6px;height:15.6px;color:#4d4d4d;transform:scaleX(0.994);">лето, грациозная осень и суровая зима. Природа во все времена года</span>
<div class="a" style="left:484.3px;top:140px;width:350.7px;height:273px;background:#f0f0f0;border:1.3px solid #86b986;box-shadow:0 2px 10px rgba(0,0,0,.32);"></div>
<div class="a" style="left:485.6px;top:141.1px;width:348.1px;height:18.6px;background:#fff;"></div>
<span class="t" style="left:490.7px;top:146.43px;font-size:7.9px;line-height:10.3px;height:10.3px;color:#1a1a1a;transform:scaleX(0.957);">Границы и заливка</span>
<span class="t" style="left:788.2px;top:144.19px;font-size:9.2px;line-height:12.0px;height:12.0px;color:#1a1a1a;font-weight:bold;transform:scaleX(0.640);">?</span>
<svg style="left:810px;top:140px" width="20" height="20" viewBox="810 140 20 20" fill="none"><path d="M815.600 146.800l6.500 6.500M822.100 146.800l-6.500 6.500" stroke="#1a1a1a" stroke-width="1"/></svg>
<div class="a" style="left:489.7px;top:166.3px;width:38.8px;height:12.5px;background:#f0f0f0;border:1px solid #d9d9d9;"></div>
<div class="a" style="left:575.5px;top:166.3px;width:36.8px;height:12.5px;background:#f0f0f0;border:1px solid #d9d9d9;"></div>
<div class="a" style="left:489.5px;top:178.4px;width:338.8px;height:209.2px;background:#fff;border:1px solid #d9d9d9;"></div>
<div class="a" style="left:528px;top:164px;width:48px;height:15px;background:#fff;border:1px solid #d9d9d9;border-bottom:none;"></div>
<span class="t" style="left:495.6px;top:168.49px;font-size:7.8px;line-height:10.1px;height:10.1px;color:#1a1a1a;transform:scaleX(0.949);"><u>Г</u>раница</span>
<span class="t" style="left:535.7px;top:168.49px;font-size:7.8px;line-height:10.1px;height:10.1px;color:#1a1a1a;transform:scaleX(0.928);"><u>С</u>траница</span>
<span class="t" style="left:579.4px;top:168.49px;font-size:7.8px;line-height:10.1px;height:10.1px;color:#1a1a1a;transform:scaleX(0.912);"><u>З</u>аливка</span>
<span class="t" style="left:495px;top:184.99px;font-size:7.8px;line-height:10.1px;height:10.1px;color:#1a1a1a;transform:scaleX(0.903);">Тип:</span>
<div class="a" style="left:564.4px;top:184.5px;width:1.1px;height:198.5px;background:#dcdcdc;"></div>
<div class="a" style="left:670.4px;top:184.5px;width:1.1px;height:198.5px;background:#dcdcdc;"></div>
<div class="a" style="left:495.2px;top:195px;width:22.8px;height:24.4px;background:#fff;border:1px solid #b9b9b9;"></div>
<div class="a" style="left:495.2px;top:225.2px;width:22.8px;height:24.4px;background:#fff;border:1px solid #b9b9b9;"></div>
<div class="a" style="left:495.2px;top:255.3px;width:22.8px;height:24.4px;background:#fff;border:1px solid #b9b9b9;"></div>
<div class="a" style="left:495.2px;top:285.3px;width:22.8px;height:24.4px;background:#fff;border:1px solid #b9b9b9;"></div>
<div class="a" style="left:495.2px;top:315.3px;width:22.8px;height:24.4px;background:#fff;border:1px solid #b9b9b9;"></div>
<svg style="left:484px;top:180px" width="90" height="180" viewBox="484 180 90 180" fill="none"><rect x="495.700" y="195.500" width="21.800" height="23.400" fill="#fff" stroke="#777" stroke-width=".9" stroke-dasharray="1 1"/><rect x="497.700" y="197.200" width="17.900" height="20.200" fill="#fff" stroke="#1f7bdc" stroke-width="1.600"/><path d="M505.4 199.7H513.8M500.2 202.3H513.8M500.2 204.9H513.8M500.2 207.5H513.8M500.2 210.1H513.8M500.2 212.7H508.6" stroke="#a6a6a6" stroke-width="1.1"/><rect x="499.600" y="229.4" width="13.800" height="16" fill="#fff" stroke="#111" stroke-width="1.500"/><path d="M505.4 231.5H512.3M501.2 234.0H512.3M501.2 236.5H512.3M501.2 239.0H512.3M501.2 241.5H508.1" stroke="#9a9a9a" stroke-width="1"/><path d="M500.800 276.3h13.300v-15.800" stroke="#111" stroke-width="1.400"/><rect x="499" y="259.0" width="13.800" height="16.200" fill="#fff" stroke="#333" stroke-width=".9"/><path d="M504.9 262.0H510.8M501.3 264.6H510.8M501.3 267.2H510.8M501.3 269.8H510.8M501.3 272.4H507.2" stroke="#9a9a9a" stroke-width="1"/><rect x="499.600" y="289.2" width="13.500" height="16.200" fill="#fff" stroke="#111" stroke-width="1.600"/><rect x="501.500" y="291.1" width="9.700" height="12.400" stroke="#666" stroke-width=".6"/><path d="M505.6 293.7H509.9M502.9 296.2H509.9M502.9 298.7H509.9M502.9 301.2H507.2" stroke="#9a9a9a" stroke-width="1"/><path d="M500.300 319.1v2.200l-1.300 1.200 1.300 1.200v2.300l-1.300 1.200 1.300 1.200v2.300l-1.300 1.200 1.300 1.200v1.200M500.300 319.1h13.600v15" stroke="#333" stroke-width="1"/><path d="M500.800 335.5h2M505 335.5h2M509.200 335.5h2M513 335.5h1.600" stroke="#111" stroke-width="1.900"/><path d="M506.2 321.9H511.6M502.9 324.5H511.6M502.9 327.1H511.6M502.9 329.7H511.6M502.9 332.3H508.3" stroke="#9a9a9a" stroke-width="1"/></svg>
<span class="t" style="left:524.3px;top:203.0px;font-size:7.8px;line-height:10.1px;height:10.1px;color:#1a1a1a;transform:scaleX(0.927);"><u>н</u>ет</span>
<span class="t" style="left:524.3px;top:233.3px;font-size:7.8px;line-height:10.1px;height:10.1px;color:#1a1a1a;transform:scaleX(0.955);">рам<u>к</u>а</span>
<span class="t" style="left:524.3px;top:263.6px;font-size:7.8px;line-height:10.1px;height:10.1px;color:#1a1a1a;transform:scaleX(0.944);">т<u>е</u>нь</span>
<span class="t" style="left:524.3px;top:293.9px;font-size:7.8px;line-height:10.1px;height:10.1px;color:#1a1a1a;transform:scaleX(0.948);">об<u>ъ</u>емная</span>
<span class="t" style="left:524.3px;top:324.2px;font-size:7.8px;line-height:10.1px;height:10.1px;color:#1a1a1a;transform:scaleX(0.918);">друг<u>а</u>я</span>
<span class="t" style="left:571.4px;top:184.99px;font-size:7.8px;line-height:10.1px;height:10.1px;color:#1a1a1a;transform:scaleX(0.870);">Т<u>и</u>п:</span>
<div class="a" style="left:571.4px;top:194.9px;width:93.4px;height:85.4px;background:#fff;border:1px solid #a3a3a3;"></div>
<div class="a" style="left:573.2px;top:196.6px;width:78.5px;height:15px;background:#fff;border:1px solid #3c8ee0;"></div>
<div class="a" style="left:654px;top:207px;width:8.8px;height:12.2px;background:#cdcdcd;"></div>
<svg style="left:564px;top:180px" width="110" height="110" viewBox="564 180 110 110" fill="none"><path d="M581.300 204H646.300" stroke="#8c8c8c" stroke-width="1.500"/><path d="M581.300 220.100H646.300" stroke="#8f8f8f" stroke-width=".6"/><path d="M581.300 237.400H646.300" stroke="#222" stroke-width=".9" stroke-dasharray="2.200 .7"/><path d="M581.300 253.700H646.300" stroke="#6e6e6e" stroke-width="1.300" stroke-dasharray="2 2.600"/><path d="M581.300 270.400H646.300" stroke="#222" stroke-width="1.100" stroke-dasharray="3.200 1.600 1 1.600"/><path d="M656 203.200l2.400-2.600 2.400 2.600M656 272.600l2.400 2.600 2.400-2.600" stroke="#333" stroke-width="1.300"/></svg>
<span class="t" style="left:571.4px;top:295.19px;font-size:7.8px;line-height:10.1px;height:10.1px;color:#1a1a1a;transform:scaleX(0.880);"><u>Ц</u>вет:</span>
<div class="a" style="left:571.4px;top:305.3px;width:93.1px;height:12.8px;background:#fff;border:1px solid #acacac;"></div>
<div class="a" style="left:653.0px;top:305.3px;width:11.5px;height:12.8px;background:#e7e7e7;border:1px solid #acacac;"></div>
<svg style="left:654.8px;top:307.7px" width="8" height="8" viewBox="0 0 8 8" fill="none"><path d="M1.700 3l2.300 2.300 2.300-2.300" stroke="#444" stroke-width=".9"/></svg>
<span class="t" style="left:605px;top:307.39px;font-size:7.8px;line-height:10.1px;height:10.1px;color:#1a1a1a;transform:scaleX(0.906);">Авто</span>
<span class="t" style="left:571.4px;top:320.29px;font-size:7.8px;line-height:10.1px;height:10.1px;color:#1a1a1a;transform:scaleX(0.980);"><u>Ш</u>ирина:</span>
<div class="a" style="left:571.4px;top:330.4px;width:93.1px;height:19.6px;background:#fff;border:1px solid #acacac;"></div>
<div class="a" style="left:653.0px;top:330.4px;width:11.5px;height:19.6px;background:#e7e7e7;border:1px solid #acacac;"></div>
<svg style="left:654.8px;top:336.2px" width="8" height="8" viewBox="0 0 8 8" fill="none"><path d="M1.700 3l2.300 2.300 2.300-2.300" stroke="#444" stroke-width=".9"/></svg>
<span class="t" style="left:578px;top:335.59px;font-size:7.8px;line-height:10.1px;height:10.1px;color:#1a1a1a;transform:scaleX(0.908);">0,5 пт</span>
<div class="a" style="left:608px;top:339.6px;width:41.8px;height:0.9px;background:#333;"></div>
<span class="t" style="left:571.4px;top:352.99px;font-size:7.8px;line-height:10.1px;height:10.1px;color:#1a1a1a;transform:scaleX(0.905);">Рисун<u>о</u>к:</span>
<div class="a" style="left:571.4px;top:363px;width:93.1px;height:19.2px;background:#fff;border:1px solid #acacac;"></div>
<div class="a" style="left:653.0px;top:363px;width:11.5px;height:19.2px;background:#e7e7e7;border:1px solid #acacac;"></div>
<svg style="left:654.8px;top:368.6px" width="8" height="8" viewBox="0 0 8 8" fill="none"><path d="M1.700 3l2.300 2.300 2.300-2.300" stroke="#444" stroke-width=".9"/></svg>
<span class="t" style="left:605.7px;top:364.99px;font-size:7.8px;line-height:10.1px;height:10.1px;color:#1a1a1a;transform:scaleX(0.892);">(нет)</span>
<span class="t" style="left:678px;top:184.69px;font-size:7.8px;line-height:10.1px;height:10.1px;color:#1a1a1a;transform:scaleX(0.965);">Образец</span>
<div class="a" style="left:711px;top:187.8px;width:112.5px;height:0.9px;background:#e2e2e2;"></div>
<span class="t" style="left:710.6px;top:198.09px;font-size:7.8px;line-height:10.1px;height:10.1px;color:#1a1a1a;transform:scaleX(0.972);">Для добавления границ</span>
<span class="t" style="left:713px;top:205.9px;font-size:7.8px;line-height:10.1px;height:10.1px;color:#1a1a1a;transform:scaleX(0.962);">щелкните образец или</span>
<span class="t" style="left:718.8px;top:213.64px;font-size:7.8px;line-height:10.1px;height:10.1px;color:#1a1a1a;transform:scaleX(0.988);">используйте кнопки</span>
<svg style="left:660px;top:230px" width="180" height="110" viewBox="660 230 180 110" fill="none"><path d="M744 245.00H783M724.6 248.85H783M724.6 252.70H783M724.6 256.55H783M724.6 260.40H783M724.6 264.25H783M724.6 268.10H783M724.6 271.95H783M724.6 275.80H783M724.6 279.65H783M724.6 283.50H783M724.6 287.35H783M724.6 291.20H763.8" stroke="#9d9d9d" stroke-width="1.800"/><path d="M718.800 242.500h4.700v-3.800M789 242.500h-4.700v-3.800M718.800 294.800h4.700v5.600M789 294.800h-4.700v5.600" stroke="#777" stroke-width=".8"/><rect x="683.9" y="246.7" width="13.600" height="12.600" fill="#e9e9e9" stroke="#bdbdbd" stroke-width=".9"/><rect x="686.9" y="249.3" width="7.600" height="7.400" fill="#fff" stroke="#9a9a9a" stroke-width=".8"/><path d="M690.7 249.3v7.400M686.9 253.0h7.600" stroke="#a6a6a6" stroke-width=".7"/><rect x="683.9" y="278.6" width="13.600" height="12.600" fill="#e9e9e9" stroke="#bdbdbd" stroke-width=".9"/><rect x="686.9" y="281.2" width="7.600" height="7.400" fill="#fff" stroke="#9a9a9a" stroke-width=".8"/><path d="M690.7 281.2v7.400M686.9 284.9h7.600" stroke="#a6a6a6" stroke-width=".7"/><rect x="726.5" y="317" width="13.600" height="12.600" fill="#e9e9e9" stroke="#bdbdbd" stroke-width=".9"/><rect x="729.5" y="319.6" width="7.600" height="7.400" fill="#fff" stroke="#9a9a9a" stroke-width=".8"/><path d="M733.3 319.6v7.400M729.5 323.3h7.600" stroke="#a6a6a6" stroke-width=".7"/><rect x="767.3" y="317" width="13.600" height="12.600" fill="#e9e9e9" stroke="#bdbdbd" stroke-width=".9"/><rect x="770.3" y="319.6" width="7.600" height="7.400" fill="#fff" stroke="#9a9a9a" stroke-width=".8"/><path d="M774.1 319.6v7.400M770.3 323.3h7.600" stroke="#a6a6a6" stroke-width=".7"/></svg>
<span class="t" style="left:678px;top:341.19px;font-size:7.8px;line-height:10.1px;height:10.1px;color:#1a1a1a;transform:scaleX(0.964);">Применит<u>ь</u> к:</span>
<div class="a" style="left:678px;top:351.2px;width:145.2px;height:13.7px;background:#fff;border:1px solid #acacac;"></div>
<div class="a" style="left:812.4000000000001px;top:351.2px;width:10.8px;height:13.7px;background:#e7e7e7;border:1px solid #acacac;"></div>
<svg style="left:813.8px;top:354.1px" width="8" height="8" viewBox="0 0 8 8" fill="none"><path d="M1.700 3l2.300 2.300 2.300-2.300" stroke="#444" stroke-width=".9"/></svg>
<span class="t" style="left:680.2px;top:353.3px;font-size:7.8px;line-height:10.1px;height:10.1px;color:#1a1a1a;transform:scaleX(0.929);">всему документу</span>
<div class="a" style="left:767.2px;top:368.4px;width:55.8px;height:13.9px;background:#e1e1e1;border:1px solid #adadad;"></div>
<span class="t" style="left:772.6px;top:371.3px;font-size:7.8px;line-height:10.1px;height:10.1px;color:#1a1a1a;transform:scaleX(0.938);">Пара<u>м</u>етры...</span>
<div class="a" style="left:728px;top:393.4px;width:47.2px;height:13.8px;background:#e3e3e3;border:1px solid #2f86dc;box-shadow:inset 0 0 0 .7px #4b97e2;"></div>
<span class="t" style="left:746.5px;top:396.19px;font-size:7.8px;line-height:10.1px;height:10.1px;color:#1a1a1a;transform:scaleX(0.924);">ОК</span>
<div class="a" style="left:781.5px;top:393.4px;width:47.3px;height:13.8px;background:#e1e1e1;border:1px solid #adadad;"></div>
<span class="t" style="left:792px;top:396.19px;font-size:7.8px;line-height:10.1px;height:10.1px;color:#1a1a1a;transform:scaleX(0.940);">Отмена</span>
<svg style="left:0;top:0" width="1024" height="444" viewBox="0 0 1024 444"><rect x="952.3" y="33.6" width="42.3" height="61.0" rx="4.5" fill="none" stroke="#e6392d" stroke-width="3"/><rect x="529.5" y="163.9" width="45.0" height="16.6" rx="3.5" fill="none" stroke="#e6392d" stroke-width="3"/><rect x="494.0" y="222.5" width="55.0" height="28.6" rx="4" fill="none" stroke="#e6392d" stroke-width="3"/><path d="M489.1 66.3L536.1 154.0L530.3 157.4L546.4 162.5L549.8 145.9L544.0 149.3L489.8 65.8Z" fill="#e6392d" stroke="#e6392d" stroke-width="1.8" stroke-linejoin="round"/><path d="M403.0 185.8L476.2 219.6L473.8 225.3L487.0 220.8L481.0 208.2L478.6 214.0L403.1 185.4Z" fill="#e6392d" stroke="#e6392d" stroke-width="1.6" stroke-linejoin="round"/><path d="M877.8 385.7L962.3 128.7L975.9 132.8L961.6 100.9L932.3 119.9L946.0 123.9L876.9 385.4Z" fill="#e6392d" stroke="#e6392d" stroke-width="4" stroke-linejoin="round"/></svg>
</body></html>
